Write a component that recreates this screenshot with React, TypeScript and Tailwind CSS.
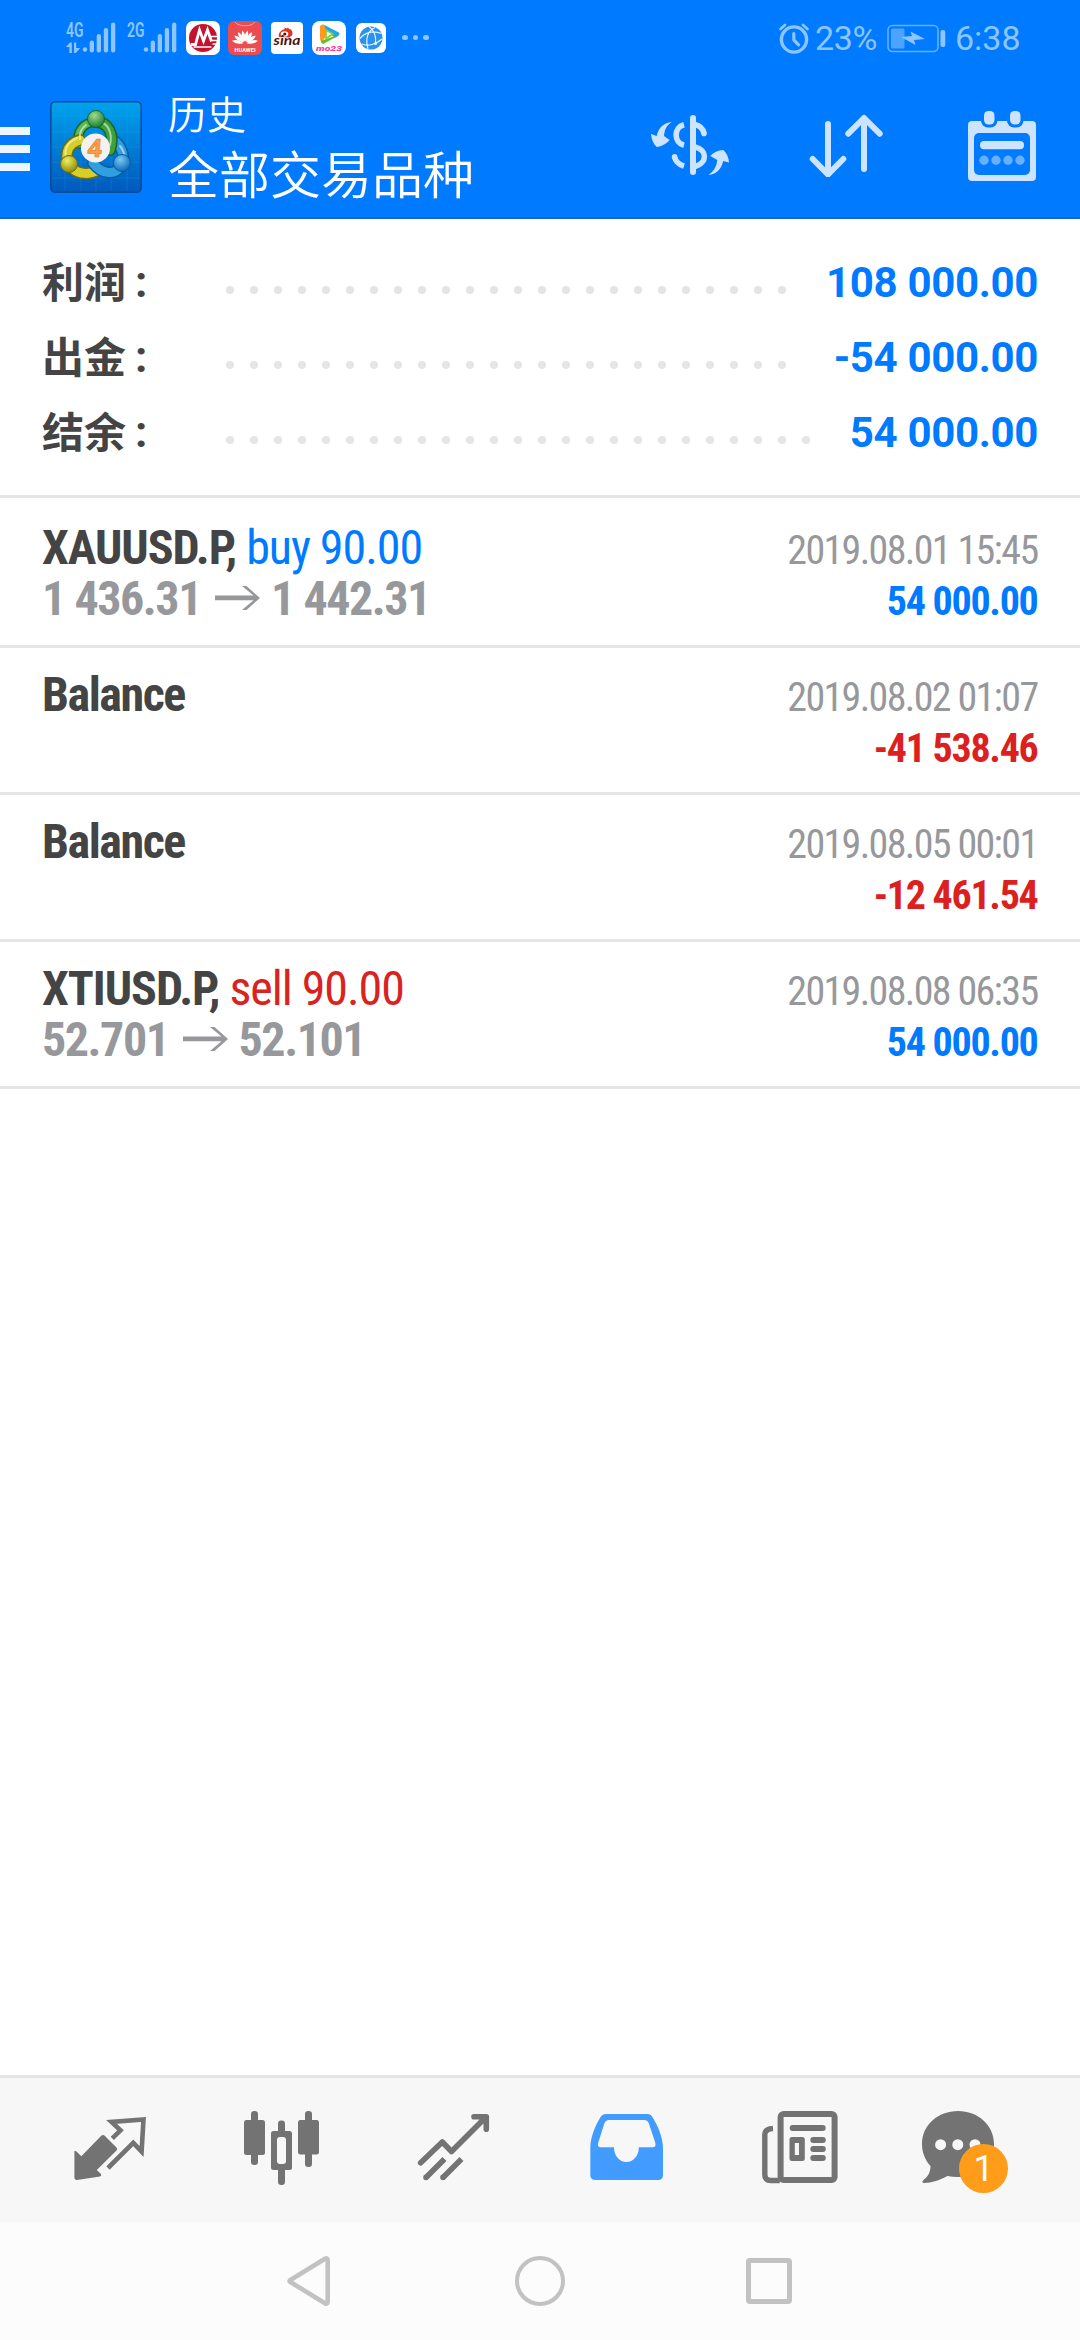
import React from "react";

type Summary = { label: string; value: string; dots: number };

const SUMMARY: Summary[] = [
  { label: "利润", value: "108 000.00", dots: 24 },
  { label: "出金", value: "-54 000.00", dots: 24 },
  { label: "结余", value: "54 000.00", dots: 25 },
];

type Deal = {
  name: string;
  side?: "buy" | "sell";
  volume?: string;
  from?: string;
  to?: string;
  time: string;
  amount: string;
};

const DEALS: Deal[] = [
  { name: "XAUUSD.P,", side: "buy", volume: "90.00", from: "1 436.31", to: "1 442.31", time: "2019.08.01 15:45", amount: "54 000.00" },
  { name: "Balance", time: "2019.08.02 01:07", amount: "-41 538.46" },
  { name: "Balance", time: "2019.08.05 00:01", amount: "-12 461.54" },
  { name: "XTIUSD.P,", side: "sell", volume: "90.00", from: "52.701", to: "52.101", time: "2019.08.08 06:35", amount: "54 000.00" },
];

function Signal({ label, arrows }: { label: string; arrows?: boolean }) {
  return (
    <div className="flex h-[34px] w-[61px] shrink-0">
      <svg width="61" height="34" viewBox="0 0 61 34" fill="#8cc5ff" className="overflow-visible">
        <text x="0" y="15.500" fontSize="19.500" fontWeight="600" textLength="17.500" lengthAdjust="spacingAndGlyphs" fontFamily="Roboto, sans-serif">
          {label}
        </text>
        {arrows && <path d="M0 26l4-4.500h1.800V32H3.400v-6zM8 21.500h2.200V27h4L9.800 32H8z" />}
        <circle cx="19" cy="28.500" r="2.300" />
        <rect x="23.700" y="19.500" width="4.300" height="12" rx="2.100" />
        <rect x="30.700" y="13" width="4.300" height="18.500" rx="2.100" />
        <rect x="37.800" y="7" width="4.300" height="24.500" rx="2.100" />
        <rect x="45" y="1.500" width="4.300" height="30" rx="2.100" />
      </svg>
    </div>
  );
}

function BankIcon() {
  return (
    <svg width="34" height="34" viewBox="0 0 34 34">
      <rect width="34" height="34" rx="7" fill="#fff" />
      <circle cx="17" cy="17" r="14" fill="#c4142d" />
      <path d="M5 23.500h4.500L13.500 9l4 11L21.500 9l4 11.500" fill="none" stroke="#fff" strokeWidth="2.800" />
      <path d="M7.500 26h18M25 15.500h7M26 19.500h6M26.500 23h4" stroke="#fff" strokeWidth="1.500" fill="none" />
    </svg>
  );
}

const PETALS = [-78, -54, -32, -11, 11, 32, 54, 78];

function HuaweiIcon() {
  return (
    <svg width="34" height="34" viewBox="0 0 34 34">
      <rect width="34" height="34" rx="6" fill="#ea4c50" />
      <path d="M7 1c3 5 17 5 20 0" fill="none" stroke="#f5a09c" strokeWidth="1" />
      <g fill="#fff">
        {PETALS.map((a) => (
          <path key={a} d="M17 22c-2.700-5-2.800-10 0-13.500 2.800 3.500 2.700 8.500 0 13.500z" transform={`rotate(${a} 17 22.500) translate(0 -1.200) translate(17 22) scale(.78 .85) translate(-17 -22)`} />
        ))}
        <text x="17" y="30.500" fontSize="5.500" fontWeight="700" textAnchor="middle" textLength="21" fontFamily="Roboto, sans-serif">
          HUAWEI
        </text>
      </g>
    </svg>
  );
}

function SinaIcon() {
  return (
    <svg width="32" height="32" viewBox="0 0 32 32">
      <rect width="32" height="32" rx="4" fill="#fff" />
      <path d="M8 15c-1-4 2-7 6-8l-1-1.500 3 1 1-1 1 1.500 2 .5c1.500 2 2 4 1 6l-3 2z" fill="#e0321e" />
      <ellipse cx="13.500" cy="12" rx="3.800" ry="2.800" fill="#fff" />
      <circle cx="13.800" cy="12" r="1.600" fill="#5a1008" />
      <text x="16" y="22.500" fontSize="14" fontStyle="italic" fontWeight="700" textAnchor="middle" textLength="27" lengthAdjust="spacingAndGlyphs" fill="#4a1410" fontFamily="Lato, sans-serif">
        sina
      </text>
    </svg>
  );
}

function VideoIcon() {
  return (
    <svg width="34" height="34" viewBox="0 0 34 34">
      <rect width="34" height="34" rx="8" fill="#fff" />
      <path d="M8 6c0-2 2-3 4-2l6 3-8 15c-1-1-2-3-2-5z" fill="#ff9a1e" />
      <path d="M12 4l14 7c2 1 2 3 0 4l-3 2-9-8z" fill="#1ea4f0" />
      <path d="M9 20l14-5 2 .5L12 22.500c-1.500.7-3-.5-3-2.500z" fill="#5fc12a" />
      <path d="M14 9l7 4-7 4.500z" fill="#fff" stroke="#7fd034" strokeWidth="1.600" />
      <text x="17" y="29.500" fontSize="7" fontWeight="900" fontStyle="italic" textAnchor="middle" textLength="26" lengthAdjust="spacingAndGlyphs" fill="#f53e9a" fontFamily="Roboto, sans-serif">
        mo23
      </text>
    </svg>
  );
}

function GlobeIcon() {
  return (
    <svg width="30" height="30" viewBox="0 0 30 30">
      <rect width="30" height="30" rx="6" fill="#fff" />
      <circle cx="15" cy="15" r="11.500" fill="#2a93ee" />
      <path d="M13 3.500C18 7 20.500 13 19.500 21M4 15.500C9 9.500 17 7 25.500 10.500M5.500 21C12 23.500 20 21.500 26 16M19 4.500C12 8 9 15 12 26" fill="none" stroke="#e6f5ff" strokeWidth="1.200" />
      <circle cx="19.500" cy="20.500" r="1.500" fill="#e6f5ff" />
    </svg>
  );
}

function StatusBar() {
  return (
    <div className="flex h-[75px] items-center text-[#8cc5ff]">
      <div className="ml-[66px] flex items-center">
        <Signal label="4G" arrows />
        <Signal label="2G" />
        <div className="-ml-0.5 flex items-center">
          <BankIcon />
          <div className="ml-2 flex"><HuaweiIcon /></div>
          <div className="ml-[9px] flex"><SinaIcon /></div>
          <div className="ml-[9px] flex"><VideoIcon /></div>
          <div className="ml-[10px] flex"><GlobeIcon /></div>
          <div className="ml-[16px] flex gap-[5px]">
            <i className="size-[5.500px] rounded-full bg-[#8cc5ff]" />
            <i className="size-[5.500px] rounded-full bg-[#8cc5ff]" />
            <i className="size-[5.500px] rounded-full bg-[#8cc5ff]" />
          </div>
        </div>
      </div>
      <div className="mr-[59px] ml-auto flex items-center">
        <svg width="34" height="34" viewBox="0 0 34 34" fill="none" stroke="#8cc5ff" strokeLinecap="round">
          <circle cx="17" cy="18.500" r="12.600" strokeWidth="3.400" />
          <path d="M16.800 12.500v6.500l4.800 4.800" strokeWidth="3.200" strokeLinejoin="round" />
          <path d="M3.500 8L8 4M30.500 8L26 4" strokeWidth="2.800" />
        </svg>
        <span className="ml-[4px] w-[64px] text-[34px] leading-none tracking-[-0.3px] whitespace-nowrap">23%</span>
        <svg className="ml-[8px]" width="60" height="30" viewBox="0 0 60 30">
          <rect x="1" y="2.500" width="50" height="26" rx="4.500" fill="none" stroke="#66b0ff" strokeWidth="1.600" />
          <rect x="4" y="5.500" width="13.500" height="20" rx="1.500" fill="#4da3ff" />
          <path d="M14 14l11-1-1.500-4.500L38 16l-11 1 1.500 5z" fill="#8cc5ff" />
          <rect x="53.500" y="7" width="4.800" height="17" rx="2" fill="#8cc5ff" />
        </svg>
        <span className="ml-[8px] w-[66px] text-[34px] leading-none whitespace-nowrap">6:38</span>
      </div>
    </div>
  );
}

function AppLogo() {
  return (
    <svg width="92" height="92" viewBox="0 0 92 92">
      <defs>
        <linearGradient id="lg-bg" x1="0" y1="0" x2="0" y2="1">
          <stop offset="0" stopColor="#00a2ee" />
          <stop offset="1" stopColor="#0059bd" />
        </linearGradient>
        <radialGradient id="lg-g" cx=".4" cy=".3" r=".7">
          <stop offset="0" stopColor="#9fdc8c" />
          <stop offset="1" stopColor="#1c8030" />
        </radialGradient>
        <radialGradient id="lg-y" cx=".4" cy=".3" r=".7">
          <stop offset="0" stopColor="#f0ee62" />
          <stop offset="1" stopColor="#8f8c0c" />
        </radialGradient>
        <radialGradient id="lg-b" cx=".4" cy=".3" r=".7">
          <stop offset="0" stopColor="#7cc9f5" />
          <stop offset="1" stopColor="#0a6cb8" />
        </radialGradient>
      </defs>
      <rect x=".8" y=".8" width="90.400" height="90.400" rx="4.500" fill="url(#lg-bg)" stroke="#0a4c9c" strokeWidth="1.600" />
      <path d="M15 2v88M31 2v88M46 2v88M61 2v88M77 2v88M2 15h88M2 31h88M2 46h88M2 61h88M2 77h88" stroke="#2db4ff" strokeOpacity=".18" />
      <g fill="none" strokeLinecap="round">
        <path d="M46 21c-13 0-20 10-17 22" stroke="#15662a" strokeWidth="10" />
        <path d="M46 21c-13 0-20 10-17 22" stroke="#5fb84e" strokeWidth="7" />
        <path d="M30 39c-14 4-17 18-8 28 7 7 19 7 28 1" stroke="#6f6c08" strokeWidth="12" />
        <path d="M30 39c-14 4-17 18-8 28 7 7 19 7 28 1" stroke="#d6cf2a" strokeWidth="9" />
        <path d="M43 62c8 11 22 13 28 3 4-8 2-17-5-24" stroke="#0a5aa0" strokeWidth="12" />
        <path d="M43 62c8 11 22 13 28 3 4-8 2-17-5-24" stroke="#2f9fe0" strokeWidth="9" />
        <path d="M46 21c12 0 19 12 14 28" stroke="#15662a" strokeWidth="12" />
        <path d="M46 21c12 0 19 12 14 28" stroke="#3fa03c" strokeWidth="9" />
        <path d="M48 20c10 2 15 12 12 24M27 37c-9 4-13 11-11 19M70 45c6 7 5 15 0 20M36 24c-4 3-7 8-6 14" stroke="#fff" strokeOpacity=".55" strokeWidth="2" />
      </g>
      <circle cx="46" cy="18" r="8.500" fill="url(#lg-g)" stroke="#15662a" />
      <circle cx="19" cy="63" r="8.500" fill="url(#lg-y)" stroke="#6f6c08" />
      <circle cx="72" cy="62" r="8.500" fill="url(#lg-b)" stroke="#0a5aa0" />
      <circle cx="45.500" cy="47" r="14.500" fill="#f4f1f0" />
      <text x="45" y="56" fontSize="25" fontWeight="700" textAnchor="middle" fill="#f3a04c" stroke="#ee7d1c" strokeWidth=".7" fontFamily="Open Sans, sans-serif" transform="translate(4 0) skewX(-5)">
        4
      </text>
    </svg>
  );
}

function CurrencyIcon() {
  return (
    <svg width="80" height="64" viewBox="650 113 80 64" fill="#cce4ff">
      <rect x="690" y="115" width="6" height="60" rx="3" />
      <g fill="none" stroke="#cce4ff" strokeWidth="5.600">
        <path d="M684 124.800C673.500 127.500 673.500 142.500 684 145.200M684 166.200C679 164.500 675.500 161.500 674.600 157" />
        <path d="M674.600 157v-.1M704 133.400v-.1" strokeLinecap="round" />
        <path d="M695 124.500C699.500 125.500 703 129 704 133.300M695 147C707.500 149.500 707.500 163.500 695 166.400" />
      </g>
      <path d="M671.700 122C666 125.500 664.500 130.500 664 136L669.700 140C666 144 662 146.500 656.700 147C653 143.500 651.500 139 651 134L656.700 136C658.500 127.500 664 122.500 671.700 122z" />
      <path d="M708.300 175C714 171 716.500 166.500 717.300 160L710.300 156C713.500 152.500 718 150.200 723.300 150C727 153.500 728.700 157.500 729 162.500L723.300 161C721 169.500 716.500 174.500 708.300 175z" />
    </svg>
  );
}

function SortIcon() {
  return (
    <svg width="80" height="64" viewBox="806 113 80 64" fill="none" stroke="#cce4ff" strokeWidth="6" strokeLinecap="round" strokeLinejoin="round">
      <path d="M828 124v50M812.700 159L828 174.500 843.300 159M864 169V118M848.300 133.700L864 118l15.700 15.700" />
    </svg>
  );
}

function CalendarIcon() {
  return (
    <svg width="80" height="74" viewBox="962 109 80 74">
      <rect x="968" y="121" width="68" height="60" rx="4" fill="#cce4ff" />
      <rect x="974" y="133" width="56" height="42" rx="5" fill="#007aff" />
      <rect x="981" y="108" width="16.500" height="19.500" rx="7" fill="#007aff" />
      <rect x="1007" y="108" width="16.500" height="19.500" rx="7" fill="#007aff" />
      <rect x="984" y="111" width="10.500" height="13.500" rx="4.500" fill="#cce4ff" />
      <rect x="1010" y="111" width="10.500" height="13.500" rx="4.500" fill="#cce4ff" />
      <rect x="980" y="141" width="44" height="8.300" rx="4" fill="#cce4ff" />
      {[984, 996, 1008, 1020].map((x) => (
        <circle key={x} cx={x} cy="160.300" r="4.700" fill="#66b0ff" />
      ))}
    </svg>
  );
}

function Header() {
  return (
    <header className="h-[219px] border-b-2 border-[#1469c7] bg-[#007aff]">
      <StatusBar />
      <div className="flex h-[142px]">
        <div className="mt-[52px] flex w-[30px] flex-col gap-[10px]">
          <i className="h-2 bg-[#edf6ff]" />
          <i className="h-2 bg-[#edf6ff]" />
          <i className="h-2 bg-[#edf6ff]" />
        </div>
        <div className="mt-[26px] ml-5"><AppLogo /></div>
        <div className="ml-[26px] flex flex-col font-['Noto_Sans_CJK_SC',sans-serif] whitespace-nowrap text-white">
          <span className="mt-[12px] text-[39px] leading-[50px] font-[350]">历史</span>
          <span className="text-[51px] leading-[70px] font-[350]">全部交易品种</span>
        </div>
        <div className="mr-[38px] ml-auto flex">
          <div className="mt-[38px] flex"><CurrencyIcon /></div>
          <div className="mt-[38px] ml-[76px] flex"><SortIcon /></div>
          <div className="mt-[34px] ml-[76px] flex"><CalendarIcon /></div>
        </div>
      </div>
    </header>
  );
}

function SummaryRow({ label, value, dots }: Summary) {
  return (
    <div className="flex h-[75px] text-[42px] leading-[75px] font-bold">
      <div className="flex w-[184px] text-[#444]">
        <span className="-mt-[3px] font-['Noto_Sans_CJK_SC',sans-serif]">{label}</span>
        <span className="ml-[9px] text-[44px]">:</span>
      </div>
      <div className="mt-[41px] flex gap-4">
        {Array.from({ length: dots }, (_, i) => (
          <i key={i} className="size-2 rounded-full bg-[#e5e5e5]" />
        ))}
      </div>
      <span className="ml-auto tracking-[-0.35px] whitespace-nowrap text-[#007aff]">{value}</span>
    </div>
  );
}

function PriceArrow() {
  return (
    <svg className="mt-[11px] mr-[10px] ml-[14px]" width="46" height="28" viewBox="0 0 46 28" fill="#97989b">
      <path d="M27 2h4.500L45 14 31.500 26H27L38.500 16.300H0V11.500H38.500z" />
    </svg>
  );
}

function DealRow({ deal, first }: { deal: Deal; first: boolean }) {
  const negative = deal.amount.startsWith("-");
  return (
    <div className={`flex justify-between border-b-[3px] border-[#e5e5e5] px-[42px] font-['Roboto_Condensed',Roboto,sans-serif] whitespace-nowrap [font-stretch:75%] ${first ? "h-[150px] pt-6" : "h-[147px] pt-[21px]"}`}>
      <div className="text-[48px] leading-[51px]">
        <div className={deal.side ? "tracking-[-1.05px]" : "tracking-[-1.45px]"}>
          <span className="font-bold text-[#444]">{deal.name}</span>
          {deal.side && (
            <span className={deal.side === "buy" ? "text-[#007aff]" : "text-[#d92323]"}>
              {" "}
              {deal.side} {deal.volume}
            </span>
          )}
        </div>
        {deal.from && (
          <div className="flex font-bold tracking-[-1.45px] text-[#97989b]">
            <span>{deal.from}</span>
            <PriceArrow />
            <span>{deal.to}</span>
          </div>
        )}
      </div>
      <div className="mr-[0.5px] pt-[3px] text-right text-[40px] leading-[51px]">
        <div className="tracking-[-1.65px] text-[#97989b]">{deal.time}</div>
        <div className={`font-bold tracking-[-1.3px] ${negative ? "text-[#dc1f1f]" : "text-[#007aff]"}`}>{deal.amount}</div>
      </div>
    </div>
  );
}

function TabBar() {
  return (
    <nav className="flex h-[147px] border-t-[3px] border-[#e5e5e5] bg-[#f7f7f7] px-6">
      <svg width="172" height="144" viewBox="24 2078 172 144">
        <path d="M74.400 2151Q76 2150.500 77 2152L81.300 2156.300 101 2136Q103 2134 105 2136L116.500 2147.500Q118 2149 116.500 2150.500L96.800 2170 101 2174Q102 2175.500 100 2176.500L77 2180Q74.400 2180 74.400 2177.500z" fill="#737373" />
        <path d="M112.300 2138.300L120.500 2130.300 111.500 2121.900 143.500 2119.500 141.600 2151.500 133.300 2142.800 108 2168" fill="none" stroke="#737373" strokeWidth="4.600" strokeLinejoin="miter" />
      </svg>
      <svg width="172" height="144" viewBox="196 2078 172 144" fill="#737373">
        <rect x="244" y="2120" width="21" height="35" rx="2.500" />
        <rect x="251" y="2111" width="7" height="54" rx="3.200" />
        <rect x="298" y="2120" width="21" height="34.500" rx="2.500" />
        <rect x="305" y="2111" width="7" height="56" rx="3.200" />
        <rect x="271" y="2131" width="21" height="39" rx="2.500" />
        <rect x="278" y="2120.500" width="7" height="64.500" rx="3.200" />
        <rect x="277" y="2137" width="9" height="27" rx="3" fill="#f7f7f7" />
      </svg>
      <svg width="172" height="144" viewBox="368 2078 172 144" fill="none" stroke="#737373" strokeWidth="5.600" strokeLinejoin="round">
        <path d="M420.700 2162.700L442.300 2142 451.500 2151.500 485 2118M474 2116.800h12.300v12.500" strokeLinecap="round" />
        <path d="M426 2177.500v-.1M443 2177.500v-.1" strokeLinecap="round" />
        <path d="M426 2177.500L444.500 2159M443 2177.500L461.500 2159" />
      </svg>
      <svg width="172" height="144" viewBox="540 2078 172 144">
        <path d="M606 2114H647.500Q651 2114 653 2118C658 2126 663 2138 663 2148V2175Q663 2180 658 2180H595.500Q590.300 2180 590.300 2175V2148C590.300 2138 595 2126 600 2118Q602 2114 606 2114z" fill="#429cff" />
        <path d="M609 2120H644Q647.500 2120 648.700 2123L655.200 2142.500Q656.500 2147.300 652.500 2147.300H638.800C638.800 2156 633.500 2162 626.400 2162S614 2156 614 2147.300H600.500Q597 2147.300 598.300 2142.500L604.500 2123Q605.800 2120 609 2120z" fill="#f7f7f7" />
      </svg>
      <svg width="172" height="144" viewBox="712 2078 172 144" fill="#737373">
        <rect x="780.600" y="2114" width="54" height="66" rx="3" fill="none" stroke="#737373" strokeWidth="6" />
        <path d="M773 2128.500q-8.200.5-8.200 6v40q0 6 6 6h9" fill="none" stroke="#737373" strokeWidth="5.400" />
        <rect x="789.700" y="2125" width="36" height="6" rx="3" />
        <rect x="789.500" y="2137" width="15.300" height="24" rx="2.500" />
        <rect x="794.800" y="2143" width="4.200" height="12" fill="#f7f7f7" />
        <rect x="810.300" y="2137" width="15.500" height="6" rx="3" />
        <rect x="810.300" y="2146" width="15.500" height="6" rx="3" />
        <rect x="810.300" y="2155" width="15.500" height="6" rx="3" />
      </svg>
      <div className="relative w-[172px]">
        <svg width="172" height="144" viewBox="884 2078 172 144">
          <path d="M958 2111C978 2111 994 2125 994 2144S978 2177 958 2177Q952 2177 947.400 2176C940 2180 932 2183 924 2183Q921.500 2182.500 923 2180.500C929 2176 930.500 2171 930.500 2166C925 2160 922 2152 922 2144 922 2125 938 2111 958 2111z" fill="#737373" />
          <circle cx="940.600" cy="2144.700" r="5.500" fill="#f7f7f7" />
          <circle cx="957.800" cy="2144.700" r="5.500" fill="#f7f7f7" />
          <circle cx="975" cy="2144.700" r="5.500" fill="#f7f7f7" />
        </svg>
        <span className="absolute top-[66px] left-[75px] flex size-[49px] items-center justify-center rounded-full bg-[#ff9c1a] text-[36px] leading-none text-white">1</span>
      </div>
    </nav>
  );
}

function SystemNav() {
  return (
    <div className="flex h-[118px] items-center bg-[#fcfcfc]">
      <svg className="ml-[284px]" width="50" height="54" viewBox="284 2254 50 54" fill="none" stroke="#c2c2c2" strokeWidth="4.600" strokeLinejoin="round">
        <path d="M290 2280.200Q289 2281 290 2281.800L325 2303.300Q327.700 2304.500 327.700 2301.500V2260.500Q327.700 2257.500 325 2258.700z" />
      </svg>
      <i className="ml-[181px] size-[50px] rounded-full border-[4.500px] border-[#c2c2c2]" />
      <i className="ml-[181px] size-[46px] rounded-[4px] border-[5px] border-[#c2c2c2]" />
    </div>
  );
}

export default function App() {
  return (
    <div className="flex h-[2340px] w-[1080px] flex-col overflow-hidden bg-white font-[Roboto,'Noto_Sans_CJK_SC',sans-serif]">
      <Header />
      <section className="h-[279px] border-b-[3px] border-[#e5e5e5] px-[42px] pt-[26px]">
        {SUMMARY.map((s) => (
          <SummaryRow key={s.label} {...s} />
        ))}
      </section>
      <main className="flex-1">
        {DEALS.map((d, i) => (
          <DealRow key={d.time} deal={d} first={i === 0} />
        ))}
      </main>
      <TabBar />
      <SystemNav />
    </div>
  );
}
